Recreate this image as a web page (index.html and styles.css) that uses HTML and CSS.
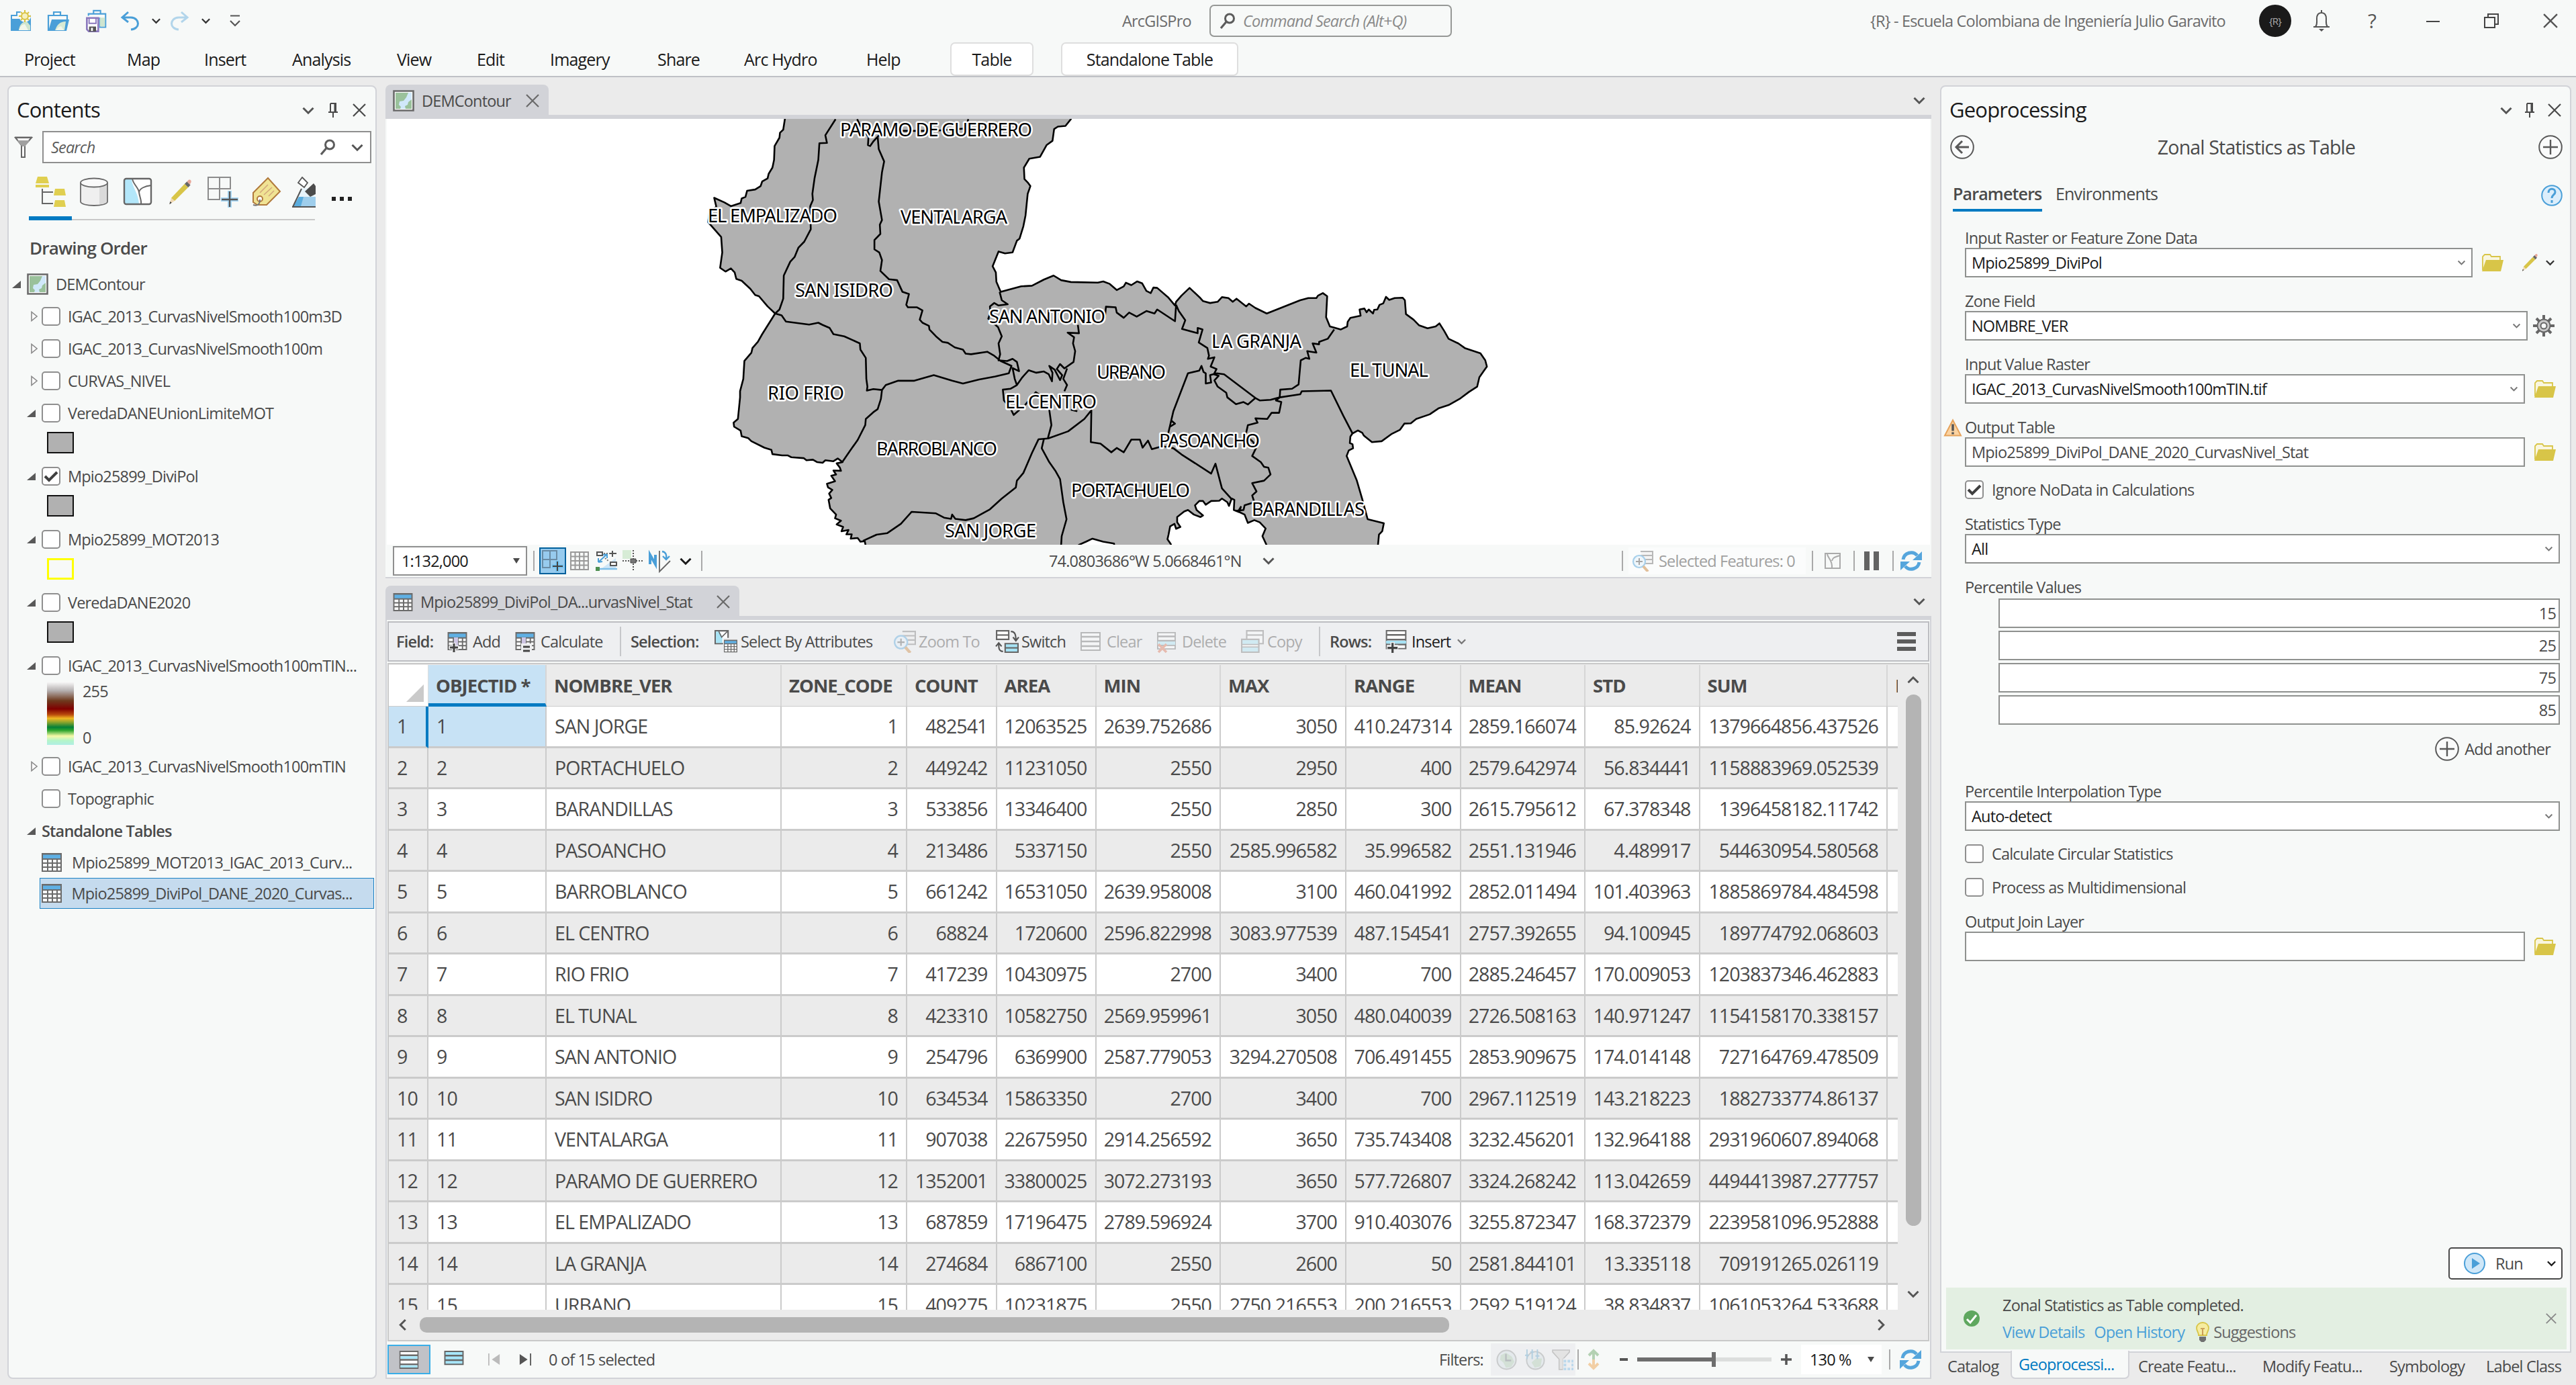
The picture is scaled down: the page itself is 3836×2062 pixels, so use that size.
FILE: index.html
```html
<!DOCTYPE html>
<html lang="en">
<head>
<meta charset="utf-8">
<title>ArcGISPro</title>
<link rel="stylesheet" href="styles.css">
</head>
<body>
<svg class="defs" aria-hidden="true">
  <symbol id="chev" viewBox="0 0 16 12"><path d="M2 3l6 6 6-6" fill="none" stroke="currentColor" stroke-width="2.4"/></symbol>
  <symbol id="x" viewBox="0 0 20 20"><path d="M1 1l18 18M19 1L1 19" fill="none" stroke="currentColor" stroke-width="2.2"/></symbol>
  <symbol id="pin" viewBox="0 0 16 22"><path d="M4 1h8v12M4 1v12M1 14h14M8 14v8" fill="none" stroke="currentColor" stroke-width="2"/><path d="M9.500 1h3v13h-3z" fill="currentColor"/></symbol>
  <symbol id="mag" viewBox="0 0 24 24"><circle cx="15" cy="8.500" r="6.500" fill="none" stroke="currentColor" stroke-width="3"/><path d="M10.500 13L2 23" stroke="currentColor" stroke-width="3.200"/></symbol>
  <symbol id="tri" viewBox="0 0 10 8"><path d="M0 0h10L5 8z" fill="currentColor"/></symbol>
  <symbol id="open" viewBox="0 0 14 14"><path d="M14 1v12H0z" fill="#595959"/></symbol>
  <symbol id="closed" viewBox="0 0 10 16"><path d="M1 1.500v13L9 8z" fill="#fff" stroke="#8a8a8a" stroke-width="1.600"/></symbol>
  <symbol id="check" viewBox="0 0 28 28"><rect x="1" y="1" width="26" height="26" rx="4" fill="#fff" stroke="#8f8f8f" stroke-width="2"/></symbol>
  <symbol id="checked" viewBox="0 0 28 28"><rect x="1" y="1" width="26" height="26" rx="4" fill="#fff" stroke="#8f8f8f" stroke-width="2"/><path d="M5 14l6 6L23 8" fill="none" stroke="#404040" stroke-width="4"/></symbol>
  <symbol id="map" viewBox="0 0 32 32"><path d="M1.500 1.500h29v29h-29z" fill="#fff" stroke="#6a6a6a" stroke-width="2.600"/><path d="M4 4h24v24H4z" fill="#d0e8fa"/><path d="M4 4h19l-3 7-4 5-6 1-1 5 3 3-1 3H4zM28 14v14h-9l-1-4 4-2 1-4z" fill="#9ac19b"/></symbol>
  <symbol id="table" viewBox="0 0 30 28"><path d="M0 0h30v28H0z" fill="#6b6b6b"/><path d="M2 2.500h26V8H2z" fill="#5fb0e4"/><path d="M2 10h6v4H2zm8 0h5v4h-5zm7 0h5v4h-5zm7 0h4v4h-4zM2 16h6v4H2zm8 0h5v4h-5zm7 0h5v4h-5zm7 0h4v4h-4zM2 22h6v4H2zm8 0h5v4h-5zm7 0h5v4h-5zm7 0h4v4h-4z" fill="#fff"/></symbol>
  <symbol id="folder" viewBox="0 0 32 26"><path d="M1 24V4l3-3h8l2 3h13v6" fill="#f9f6df" stroke="#d8c548" stroke-width="1.800"/><path d="M6 9h26l-4 17H0z" fill="#d8c548"/></symbol>
  <symbol id="pencil" viewBox="0 0 40 46"><path d="M2 44l3-11 6 5z" fill="#f0d9b5"/><path d="M2 44l1-5 3 2z" fill="#444"/><path d="M5 33L28 9l6 6-23 23z" fill="#d8c548"/><path d="M28 9l4-4 6 6-4 4z" fill="#666"/><path d="M32 5l3-3c3-1 5 2 4 4l-2 4z" fill="#e8a799"/></symbol>
  <symbol id="plusc" viewBox="0 0 36 36"><circle cx="18" cy="18" r="16.800" fill="#fafbfb" stroke="#595959" stroke-width="2"/><path d="M18 7v22M7 18h22" stroke="#595959" stroke-width="2.400"/></symbol>
  <symbol id="refresh" viewBox="0 0 32 32"><path d="M4 14A12 12 0 0 1 25 8" fill="none" stroke="#55a5dc" stroke-width="5"/><path d="M32 2v13H18z" fill="#55a5dc"/><path d="M28 18A12 12 0 0 1 7 24" fill="none" stroke="#55a5dc" stroke-width="5"/><path d="M0 30V17h14z" fill="#55a5dc"/></symbol>
  <symbol id="zoomsel" viewBox="0 0 32 32"><path d="M13 2h18v18H19" fill="#eee" stroke="#777" stroke-width="2"/><path d="M13 8h18M18 14h13" stroke="#777" stroke-width="2"/><circle cx="11" cy="17" r="9" fill="#e3f1fb" stroke="#55a5dc" stroke-width="2.200"/><path d="M6 17h10M11 12v10" stroke="#555" stroke-width="2"/><path d="M17 24l7 8" stroke="#c98338" stroke-width="4"/></symbol>
  <symbol id="rows" viewBox="0 0 30 28"><path d="M1 1h28v26H1z" fill="#fff" stroke="#6a6a6a" stroke-width="2"/><path d="M1 7h28M1 14h28M1 21h28" stroke="#6a6a6a" stroke-width="2.500"/></symbol>
</svg>

<header class="app-header">
  <div class="titlebar">
    <svg class="i32" viewBox="0 0 32 32"><path d="M1 8h30v23H1z" fill="#4a9fd8"/><path d="M2 13V8h8V3h10v5h10v5" fill="#f7f9f8" stroke="#4a9fd8" stroke-width="2"/><circle cx="22" cy="9" r="9" fill="#f7f9f8"/><path d="M13 30c1-8 5-13 12-13l5 6v7z" fill="#cfe5cf"/><path d="M13 30c2-6 5-9 9-9l5 9z" fill="#f3f6ea"/><circle cx="22" cy="9" r="5" fill="#f4efc0" stroke="#d9c23e" stroke-width="2"/><path d="M22 0v3M22 15v3M13 9h3M28 9h3M16 3l2 2M28 3l-2 2M16 15l2-2M28 15l-2-2" stroke="#d9c23e" stroke-width="2"/></svg>
    <svg class="i32" viewBox="0 0 32 32"><path d="M1 31V8h28v7M9 8V3h10v5" fill="none" stroke="#4a9fd8" stroke-width="2.200"/><path d="M6 14h26l-4 17H1z" fill="#4a9fd8"/><path d="M11 30c3-8 7-13 16-13l-2 13z" fill="#d8ead4"/><path d="M12 30c3-4 6-6 8-6l4 6z" fill="#f3f6ea"/></svg>
    <svg class="i34" viewBox="0 0 34 36"><path d="M4 10V7h27v21h-9V14H7M12 7V2h11v5" fill="none" stroke="#4a9fd8" stroke-width="2.200"/><path d="M22 13h8v14h-8z" fill="#cfe5cf"/><path d="M1.500 13.500h18v21h-15l-3-3z" fill="#fff" stroke="#8a78bd" stroke-width="2.800"/><path d="M5 13v9h11v-9" fill="none" stroke="#8a78bd" stroke-width="2"/><path d="M5 27h11v8H5z" fill="#555"/><path d="M8 29h3v5H8z" fill="#fff"/></svg>
    <svg class="i28" viewBox="0 0 28 28"><path d="M11 1L2 9l9 7M2 9h13c14 1 14 17 0 18" fill="none" stroke="#4a9fd8" stroke-width="3"/></svg>
    <svg class="chev sm dark"><use href="#chev"/></svg>
    <svg class="i28 dim" viewBox="0 0 28 28"><path d="M17 1l9 8-9 7M26 9H13C-1 10-1 26 13 27" fill="none" stroke="#4a9fd8" stroke-width="3"/></svg>
    <svg class="chev sm dark"><use href="#chev"/></svg>
    <svg class="qat" viewBox="0 0 18 18"><path d="M2 1.500h14M2 9l7 7 7-7" fill="none" stroke="#555" stroke-width="2.200"/></svg>
    <span class="soft">ArcGISPro</span>
    <div class="cmd"><svg class="mag"><use href="#mag"/></svg><i>Command Search (Alt+Q)</i></div>
    <span class="soft org">{R} - Escuela Colombiana de Ingeniería Julio Garavito</span>
    <div class="avatar">{R}</div>
    <svg class="bell" viewBox="0 0 26 32"><path d="M1 25h24M4 25c3-4 2-6 2-12C6 6 9 4 13 4s7 2 7 9c0 6-1 8 2 12M13 4V0" fill="none" stroke="#555" stroke-width="2"/><path d="M9 28h8l-4 4z" fill="#555"/></svg>
    <span class="helpq">?</span>
    <svg class="win" viewBox="0 0 22 22"><path d="M1 12h20" stroke="#444" stroke-width="2"/></svg>
    <svg class="win" viewBox="0 0 22 22"><path d="M1 6h15v15H1zM6 6V1h15v15h-5" fill="none" stroke="#444" stroke-width="2"/></svg>
    <svg class="win"><use href="#x"/></svg>
  </div>
  <nav class="menubar">
    <span>Project</span><span>Map</span><span>Insert</span><span>Analysis</span><span>View</span><span>Edit</span><span>Imagery</span><span>Share</span><span>Arc Hydro</span><span>Help</span><span class="ctx">Table</span><span class="ctx wide">Standalone Table</span>
  </nav>
</header>

<main class="workspace">
  <section class="panel contents">
    <div class="panel-head"><h2>Contents</h2><svg class="chev"><use href="#chev"/></svg><svg class="pin"><use href="#pin"/></svg><svg class="px"><use href="#x"/></svg></div>
    <div class="search-row">
      <svg class="funnel" viewBox="0 0 28 32"><path d="M1 1.500h26M2 2l9 11v18h5V13l10-11z" fill="#fff" stroke="#666" stroke-width="2"/><path d="M4 6h20l-8 9h-4z" fill="#a0a0a0"/></svg>
      <div class="search"><i>Search</i><svg class="mag"><use href="#mag"/></svg><svg class="chev"><use href="#chev"/></svg></div>
    </div>
    <div class="modes">
      <svg viewBox="0 0 46 46"><path d="M3 0h14l3 10H0zM0 12h20v4H0z" fill="#e0cf50"/><path d="M10 18v22h16M10 23h16" fill="none" stroke="#666" stroke-width="2"/><path d="M29 18h14l2 10H27zM29 35h14l2 10H27z" fill="#e0cf50"/></svg>
      <svg viewBox="0 0 46 46"><path d="M2 9v28c0 8 40 8 40 0V9" fill="#efefef" stroke="#6a6a6a" stroke-width="1.800"/><path d="M30 15v26c7 0 11-2 11-4V11z" fill="#dadada"/><ellipse cx="22" cy="9" rx="20" ry="6.500" fill="#fafafa" stroke="#6a6a6a" stroke-width="1.800"/></svg>
      <svg viewBox="0 0 46 46"><rect x="2" y="3" width="40" height="38" rx="3" fill="#fff"/><path d="M3 4h10c1 12 10 20 11 37H3z" fill="#b3e7fa"/><path d="M14 3c1 8 9 13 10 20 1 8 4 12 3 18M24 23c1-5 8-9 18-10" fill="none" stroke="#666" stroke-width="2"/><rect x="2" y="3" width="40" height="38" rx="3" fill="none" stroke="#666" stroke-width="2.400"/></svg>
      <svg viewBox="0 0 46 46"><use href="#pencil" x="0" y="3" width="40" height="40"/></svg>
      <svg viewBox="0 0 46 46"><path d="M1 1h33v17H1zM18 1v17M1 18v16h17V18" fill="none" stroke="#8c8c8c" stroke-width="2"/><path d="M33 21v25M20 34h26" stroke="#a9d9f6" stroke-width="6"/><path d="M33 22v23M21 34h24" stroke="#555" stroke-width="2.400"/></svg>
      <svg viewBox="0 0 46 46"><path d="M2 24L24 2l18 20-20 20H8l-6-4z" fill="#f0e394" stroke="#b17a3c" stroke-width="2"/><path d="M12 24l12-12M18 27l12-11M25 29l8-8" stroke="#d3a87c" stroke-width="1.600"/><circle cx="12" cy="33" r="4" fill="#fff" stroke="#b17a3c" stroke-width="2"/><path d="M12 34c0 8-4 10-10 8" fill="none" stroke="#777" stroke-width="2"/></svg>
      <svg viewBox="0 0 35 46"><path d="M1 45l14-28h12l8 14v14z" fill="#e8f4fb"/><path d="M2 44l8-14h25v14z" fill="#5badde"/><path d="M17 30h18v14H13z" fill="#bcdcf2" opacity=".7"/><path d="M0 45h35M1 45L14 18" stroke="#555" stroke-width="2"/><path d="M15 1l8 8-5 7-9-7z" fill="#fff" stroke="#555" stroke-width="1.800"/><path d="M19 22L32 10l3 4v12l-8 4z" fill="#4c4c4c"/></svg>
      <svg class="dots" viewBox="0 0 32 8"><path d="M0 1h6v6H0zm12 0h6v6h-6zm12 0h6v6h-6z" fill="#222"/></svg>
    </div>
    <div class="mode-line"></div>
    <h3>Drawing Order</h3>
    <div class="tree">
      <div class="t t0"><svg class="tw"><use href="#open"/></svg><svg class="mp"><use href="#map"/></svg>DEMContour</div>
      <div class="t"><svg class="tc"><use href="#closed"/></svg><svg class="cb"><use href="#check"/></svg>IGAC_2013_CurvasNivelSmooth100m3D</div>
      <div class="t"><svg class="tc"><use href="#closed"/></svg><svg class="cb"><use href="#check"/></svg>IGAC_2013_CurvasNivelSmooth100m</div>
      <div class="t"><svg class="tc"><use href="#closed"/></svg><svg class="cb"><use href="#check"/></svg>CURVAS_NIVEL</div>
      <div class="t"><svg class="tw"><use href="#open"/></svg><svg class="cb"><use href="#check"/></svg>VeredaDANEUnionLimiteMOT</div>
      <div class="sw"><b></b></div>
      <div class="t"><svg class="tw"><use href="#open"/></svg><svg class="cb"><use href="#checked"/></svg>Mpio25899_DiviPol</div>
      <div class="sw"><b></b></div>
      <div class="t"><svg class="tw"><use href="#open"/></svg><svg class="cb"><use href="#check"/></svg>Mpio25899_MOT2013</div>
      <div class="sw"><b class="yellow"></b></div>
      <div class="t"><svg class="tw"><use href="#open"/></svg><svg class="cb"><use href="#check"/></svg>VeredaDANE2020</div>
      <div class="sw"><b></b></div>
      <div class="t"><svg class="tw"><use href="#open"/></svg><svg class="cb"><use href="#check"/></svg>IGAC_2013_CurvasNivelSmooth100mTIN...</div>
      <div class="ramp"><b></b><div><span>255</span><span>0</span></div></div>
      <div class="t"><svg class="tc"><use href="#closed"/></svg><svg class="cb"><use href="#check"/></svg>IGAC_2013_CurvasNivelSmooth100mTIN</div>
      <div class="t"><svg class="tc hide"></svg><svg class="cb"><use href="#check"/></svg>Topographic</div>
      <div class="t strong"><svg class="tw"><use href="#open"/></svg>Standalone Tables</div>
      <div class="t tb"><svg><use href="#table"/></svg>Mpio25899_MOT2013_IGAC_2013_Curv...</div>
      <div class="t tb sel"><svg><use href="#table"/></svg>Mpio25899_DiviPol_DANE_2020_Curvas...</div>
    </div>
  </section>

  <div class="docs">
    <section class="doc">
      <div class="tabstrip"><div class="tab"><svg class="mp"><use href="#map"/></svg><span>DEMContour</span><svg class="px"><use href="#x"/></svg></div><svg class="chev"><use href="#chev"/></svg></div>
      <div class="mapview">
        <svg class="mapsvg" viewBox="576 177 2298 634">
          <g class="land" transform="translate(1000 160) scale(.80357 .45918)">
            <path class="area" d="M212 20L210 38 207 72 201 82 200 98 191 125 190 170 187 195 180 215 178 230 168 240 165 255 155 266 140 270 137 290 130 295 128 310 110 320 98 308 79 293 83 322 70 340 68 372 92 420 94 470 90 520 100 532 110 522 117 535 120 556 130 562 146 588 155 608 162 612 178 645 192 668 186 685 168 735 160 760 150 780 148 795 135 822 133 880 127 920 127 940 123 1010 115 1022 116 1035 128 1048 130 1066 142 1072 148 1082 172 1103 185 1110 187 1124 205 1128 215 1128 222 1134 245 1137 250 1144 262 1142 270 1150 280 1152 285 1144 300 1147 308 1138 317 1150 306 1154 312 1168 314 1178 300 1177 305 1190 296 1194 303 1212 288 1220 290 1232 298 1240 292 1252 296 1266 291 1272 294 1300 305 1320 303 1332 314 1340 306 1352 318 1360 315 1374 328 1370 324 1384 334 1384 332 1398 345 1396 350 1408 358 1406 362 1440 H745 L755 1418 768 1408 780 1398 800 1408 820 1414 822 1440 H930 L925 1415 919 1400 921 1385 924 1358 932 1350 935 1366 943 1360 937 1345 937 1328 950 1310 957 1305 968 1320 980 1328 985 1323 973 1305 970 1290 978 1276 985 1276 990 1288 1000 1276 1015 1275 1020 1268 1030 1280 1033 1292 1038 1268 1043 1272 1042 1305 1052 1312 1055 1295 1050 1310 1062 1320 1068 1347 1080 1338 1090 1345 1101 1365 1095 1390 1103 1420 1100 1440 H1308 L1311 1385 1317 1374 1320 1348 1290 1335 1280 1270 1270 1210 1251 1130 1255 1112 1263 1105 1262 1092 1257 1088 1258 1067 1262 1057 1272 1047 1280 1055 1283 1064 1298 1085 1316 1082 1335 1058 1350 1045 1358 1025 1370 1024 1380 1010 1405 995 1422 975 1440 965 1462 943 1478 922 1493 905 1497 875 1505 855 1511 840 1508 820 1499 797 1470 780 1458 765 1440 750 1432 725 1423 700 1416 710 1401 716 1385 706 1375 688 1361 670 1359 625 1355 617 1340 618 1330 624 1324 614 1319 635 1312 640 1308 655 1302 656 1300 668 1292 655 1288 664 1284 652 1275 655 1277 675 1258 682 1253 695 1252 710 1240 720 1228 714 1220 710 1213 680 1215 612 1207 602 1198 610 1195 618 1180 618 1165 625 1103 668 1082 650 1070 636 1065 645 1047 620 1040 630 1032 618 1020 615 1012 630 998 634 985 628 980 618 960 585 945 610 935 630 933 642 920 615 900 585 893 584 888 602 880 595 872 570 863 564 852 576 842 568 838 580 825 592 812 572 800 564 790 568 740 566 722 560 708 545 690 558 668 578 648 580 610 598 602 565 601 535 595 515 606 467 618 473 632 470 640 432 645 425 652 385 656 350 660 280 665 255 660 243 654 232 653 195 663 166 683 160 695 122 706 108 709 70 716 62 730 60 740 38 742 20Z"/>
            <path d="M304 38L285 90 288 115 274 116 272 170 265 230 261 280 262 300 257 320 258 395 246 435 235 455 228 485 220 500 208 545 207 620 200 655 192 668 204 674 212 694 255 704 272 698 280 705 293 715 300 735 320 742 349 765 350 785 360 812 361 880 363 905 362 918 374 913 390 916 397 900 420 886 450 886 486 868 520 886 540 895 570 882 600 872 625 862 630 838 610 822 598 805 585 792 555 800 545 798 540 785 525 778 512 763 502 760 490 742 478 720 477 708 465 698 460 688 465 658 455 648 438 648 435 640 440 605 428 598 418 560 403 557 387 530 390 495 385 470 376 460 376 430 387 410 386 380 390 365 384 305 390 210 394 175 384 135 382 95 374 110 368 125 364 122 365 95 350 60 344 38M550 38l-5 30-60 8h-85l-18 18M390 916L388 945 382 978 374 988 360 1010 359 1030 345 1078 330 1115 317 1148M355 1405L380 1385 400 1380 425 1350 445 1311 490 1316 505 1330 518 1334 520 1320 526 1334 545 1338 560 1332 590 1303 612 1268 638 1232 640 1210 652 1185 668 1120 680 1076 698 1073 735 1050 765 1010 778 982 777 1085 795 1090 815 1118 825 1104 838 1118 852 1077 868 1077 873 1103 883 1080 890 1108 910 1098 930 1105 945 1125 1000 1187 1008 1155 1020 1235 1038 1270M700 980L704 1030 697 1075M690 1075L686 1105 700 1150 712 1180 720 1205 726 1280 732 1335 723 1390 722 1418M722 1418V1440M608 598L612 625 623 638 606 642 598 634 590 645 591 665 587 685 605 712 612 742 606 765 609 800 606 820 622 822 632 815 640 825 644 855 632 845 636 880 640 900 628 912 614 915 616 950 628 975 634 997 645 980M640 900L650 875 662 852 676 860 690 856 699 865 705 888 706 860 700 838 710 850 720 884 724 868 714 848 720 832 728 846 745 825 748 790 744 765 746 745 734 730 755 732 753 705M803 684L805 646 823 648 825 665 838 682 848 665 862 678 880 660 895 668 900 655 933 693 935 640M935 640L940 660 952 690 946 718 975 732 975 715 984 720 977 762 993 780 996 805 994 815 1006 810 999 840 1010 848 1005 865 1014 870 1006 885 1012 905 1028 925 1030 940 1046 962 1060 955 1068 963 1082 942 1024 865 1010 862M920 1060L930 985 957 862 978 853 982 838 986 858 990 862 990 895 1000 892 998 868 1010 862M1082 942L1090 950 1110 948 1127 940 1165 930 1168 920 1222 918 1245 1000 1262 1057M1127 940L1128 915 1150 912 1162 898 1166 820 1175 812 1182 815 1178 790 1195 795 1188 765 1200 768 1200 760 1216 750 1228 720M1127 940L1120 950 1130 955 1126 990 1112 990 1104 1010 1082 1008 1086 1022 1068 1030 1064 1062 1078 1085 1083 1105 1076 1130 1092 1150 1098 1165 1106 1168 1110 1190 1098 1210 1076 1218 1084 1245 1076 1258 1080 1280 1062 1290 1060 1305 1046 1308M930 985L926 1015 933 1025 924 1035M733 846L726 880 733 900 728 920M740 980l12 5M655 965l20-42 8 10"/>
          </g>
          <g class="labels">
            <text x="1251" y="203" textLength="286">PARAMO DE GUERRERO</text>
            <text x="1054" y="331" textLength="193">EL EMPALIZADO</text>
            <text x="1341" y="333" textLength="159">VENTALARGA</text>
            <text x="1184" y="442" textLength="146">SAN ISIDRO</text>
            <text x="1473" y="481" textLength="173">SAN ANTONIO</text>
            <text x="1804" y="518" textLength="134">LA GRANJA</text>
            <text x="1633" y="564" textLength="103">URBANO</text>
            <text x="2010" y="561" textLength="117">EL TUNAL</text>
            <text x="1143" y="595" textLength="114">RIO FRIO</text>
            <text x="1497" y="608" textLength="136">EL CENTRO</text>
            <text x="1305" y="678" textLength="180">BARROBLANCO</text>
            <text x="1726" y="666" textLength="150">PASOANCHO</text>
            <text x="1595" y="740" textLength="177">PORTACHUELO</text>
            <text x="1864" y="768" textLength="168">BARANDILLAS</text>
            <text x="1407" y="800" textLength="136">SAN JORGE</text>
          </g>
        </svg>
      </div>
      <div class="mapbar">
        <div class="scale"><span>1:132,000</span><svg class="tri"><use href="#tri"/></svg></div>
        <i class="sep"></i>
        <div class="on"><svg class="i32" viewBox="0 0 32 32"><path d="M1 1h21v13H1zM12 1v13M1 14v12h11V14" fill="none" stroke="#6a8ca5" stroke-width="2"/><path d="M23 16v16M15 24h17" stroke="#6fc1f0" stroke-width="5"/><path d="M23 17v14M16 24h15" stroke="#444" stroke-width="2"/></svg></div>
        <svg class="i28" viewBox="0 0 28 28"><path d="M1 1h26v26H1zM1 7.500h26M1 14h26M1 20.500h26M7.500 1v26M14 1v26M20.500 1v26" fill="none" stroke="#9a9a9a" stroke-width="2"/></svg>
        <svg class="i32" viewBox="0 0 32 32"><path d="M30 28H8l22-16z" fill="#cfe6f7"/><path d="M2 3h8v5H2zM22 18h9v5h-9z" fill="#fff" stroke="#555" stroke-width="2"/><path d="M25 1v9M21 5h10" stroke="#555" stroke-width="2"/><path d="M4 18L17 6M4 18l6-1M4 18v-6M17 6l-6 1M17 6v6" fill="none" stroke="#4a9fd8" stroke-width="2"/><path d="M12 5h9M14 12l6 5" stroke="#777" stroke-width="2" stroke-dasharray="2 2"/><path d="M4 28h28" stroke="#7fbfe8" stroke-width="2.500"/><path d="M0 25h6v6H0z" fill="#4d8f50"/></svg>
        <svg class="i32" viewBox="0 0 32 32"><path d="M0 0h13v13H0z" fill="#d7ecd6"/><path d="M16 0v32M0 16h32" stroke="#555" stroke-width="2" stroke-dasharray="2 2"/><path d="M12 13h8v6h-8z" fill="#777" stroke="#444"/></svg>
        <svg class="i32" viewBox="0 0 32 32"><path d="M2 21V7l8 14V7" fill="none" stroke="#4a9fd8" stroke-width="4"/><path d="M16 1v31L32 16" fill="none" stroke="#666" stroke-width="1.800"/><path d="M20 2c6 1 7 6 6 11M21 9l5 5 5-5" fill="none" stroke="#4a9fd8" stroke-width="2.400"/></svg>
        <svg class="chev blk"><use href="#chev"/></svg>
        <i class="sep"></i>
        <span>74.0803686°W 5.0668461°N</span>
        <svg class="chev fat"><use href="#chev"/></svg>
        <i class="sep"></i>
        <div class="self"><svg class="i32"><use href="#zoomsel"/></svg><span>Selected Features: 0</span></div>
        <i class="sep"></i>
        <svg class="i24" viewBox="0 0 24 24"><path d="M1 1h22v22H1zM4 2c1 7 8 8 7 21M11 12c1-5 5-6 12-8" fill="none" stroke="#aaa" stroke-width="2"/></svg>
        <i class="sep"></i>
        <svg class="i24" viewBox="0 0 24 28"><path d="M0 0h8v28H0zM14 0h8v28h-8z" fill="#636363"/></svg>
        <i class="sep"></i>
        <svg class="i32"><use href="#refresh"/></svg>
      </div>
    </section>

    <section class="doc attr">
      <div class="tabstrip"><div class="tab wide"><svg class="tbi"><use href="#table"/></svg><span>Mpio25899_DiviPol_DA...urvasNivel_Stat</span><svg class="px"><use href="#x"/></svg></div><svg class="chev"><use href="#chev"/></svg></div>
      <div class="attr-body">
        <div class="toolbar">
          <b>Field:</b>
          <svg class="i32" viewBox="0 0 32 32"><use href="#table" x="1" y="2" width="30" height="27"/><path d="M11 10h6v16h-6z" fill="#cfc6e4"/><path d="M11 18v14M4 25h14" stroke="#eeeff1" stroke-width="6"/><path d="M11 19v13M5 25h12" stroke="#444" stroke-width="3"/></svg><span>Add</span>
          <svg class="i32" viewBox="0 0 32 32"><use href="#table" x="1" y="2" width="30" height="27"/><path d="M11 10h6v12h-6z" fill="#cfc6e4"/><path d="M10 19h16v13H10z" fill="#eeeff1"/><path d="M13 24h10M13 30h10" stroke="#444" stroke-width="3"/></svg><span>Calculate</span>
          <i class="sep"></i>
          <b>Selection:</b>
          <svg class="i34" viewBox="0 0 32 32"><path d="M1 1h18v18H1z" fill="#fff" stroke="#666" stroke-width="2"/><path d="M2 2h5l4 8v8H2z" fill="#a7e3f5"/><path d="M6 2l4 8 8-8" fill="none" stroke="#666" stroke-width="1.500"/><path d="M12 11h20v21H12z" fill="#eeeff1"/><use href="#table" x="13" y="13" width="19" height="19"/></svg><span>Select By Attributes</span>
          <svg class="i34 off"><use href="#zoomsel"/></svg><span class="off">Zoom To</span>
          <svg class="i34" viewBox="0 0 32 32"><path d="M1 1h17v12H1z" fill="#fff" stroke="#666" stroke-width="2"/><path d="M1 7h17" stroke="#666" stroke-width="2"/><path d="M13 19h18v12H13z" fill="#a7e3f5" stroke="#666" stroke-width="2"/><path d="M13 25h18" stroke="#666" stroke-width="2"/><path d="M21 2c6 0 7 5 7 12M24 10l4 5 4-5M10 30c-6 0-6-5-6-11M0 23l4-5 4 5" fill="none" stroke="#555" stroke-width="2"/></svg><span>Switch</span>
          <svg class="i30 off"><use href="#rows"/></svg><span class="off">Clear</span>
          <svg class="i32 off" viewBox="0 0 32 32"><use href="#rows" x="1" y="2" width="30" height="26"/><path d="M3 16h26v5H3z" fill="#a7e3f5"/><path d="M4 20l12 12M16 20L4 32" stroke="#dc6c4c" stroke-width="3.500"/></svg><span class="off">Delete</span>
          <svg class="i34 off" viewBox="0 0 32 32"><path d="M8 1h23v18H8z" fill="#fff" stroke="#777" stroke-width="2"/><path d="M8 7h23" stroke="#777" stroke-width="2"/><path d="M1 13h24v18H1z" fill="#a7e3f5" stroke="#777" stroke-width="2"/><path d="M1 22h24" stroke="#777" stroke-width="5"/><path d="M2 22h22" stroke="#fff" stroke-width="2"/></svg><span class="off">Copy</span>
          <i class="sep"></i>
          <b>Rows:</b>
          <svg class="i34" viewBox="0 0 32 32"><use href="#rows" x="0" y="0" width="32" height="27"/><path d="M2 15h28v4H2z" fill="#a7e3f5"/><path d="M11 17v15M3 24h16" stroke="#eeeff1" stroke-width="6"/><path d="M11 18v14M4 25h14" stroke="#444" stroke-width="3"/></svg><span class="blk">Insert</span>
          <svg class="chev sm"><use href="#chev"/></svg>
          <svg class="burger" viewBox="0 0 28 28"><path d="M0 3h28M0 14h28M0 25h28" stroke="#5c5c5c" stroke-width="6"/></svg>
        </div>
        <div class="gridframe">
          <div class="clip">
            <table>
              <thead><tr><th><svg class="corner" viewBox="0 0 26 26"><path d="M26 0v26H0z" fill="#cacaca"/></svg></th><th class="cur">OBJECTID *</th><th>NOMBRE_VER</th><th>ZONE_CODE</th><th>COUNT</th><th>AREA</th><th>MIN</th><th>MAX</th><th>RANGE</th><th>MEAN</th><th>STD</th><th>SUM</th><th>M</th></tr></thead>
              <tbody>
                <tr class="first"><td>1<td>1<td>SAN JORGE<td>1<td>482541<td>12063525<td>2639.752686<td>3050<td>410.247314<td>2859.166074<td>85.92624<td>1379664856.437526<td>
                <tr><td>2<td>2<td>PORTACHUELO<td>2<td>449242<td>11231050<td>2550<td>2950<td>400<td>2579.642974<td>56.834441<td>1158883969.052539<td>
                <tr><td>3<td>3<td>BARANDILLAS<td>3<td>533856<td>13346400<td>2550<td>2850<td>300<td>2615.795612<td>67.378348<td>1396458182.11742<td>
                <tr><td>4<td>4<td>PASOANCHO<td>4<td>213486<td>5337150<td>2550<td>2585.996582<td>35.996582<td>2551.131946<td>4.489917<td>544630954.580568<td>
                <tr><td>5<td>5<td>BARROBLANCO<td>5<td>661242<td>16531050<td>2639.958008<td>3100<td>460.041992<td>2852.011494<td>101.403963<td>1885869784.484598<td>
                <tr><td>6<td>6<td>EL CENTRO<td>6<td>68824<td>1720600<td>2596.822998<td>3083.977539<td>487.154541<td>2757.392655<td>94.100945<td>189774792.068603<td>
                <tr><td>7<td>7<td>RIO FRIO<td>7<td>417239<td>10430975<td>2700<td>3400<td>700<td>2885.246457<td>170.009053<td>1203837346.462883<td>
                <tr><td>8<td>8<td>EL TUNAL<td>8<td>423310<td>10582750<td>2569.959961<td>3050<td>480.040039<td>2726.508163<td>140.971247<td>1154158170.338157<td>
                <tr><td>9<td>9<td>SAN ANTONIO<td>9<td>254796<td>6369900<td>2587.779053<td>3294.270508<td>706.491455<td>2853.909675<td>174.014148<td>727164769.478509<td>
                <tr><td>10<td>10<td>SAN ISIDRO<td>10<td>634534<td>15863350<td>2700<td>3400<td>700<td>2967.112519<td>143.218223<td>1882733774.86137<td>
                <tr><td>11<td>11<td>VENTALARGA<td>11<td>907038<td>22675950<td>2914.256592<td>3650<td>735.743408<td>3232.456201<td>132.964188<td>2931960607.894068<td>
                <tr><td>12<td>12<td>PARAMO DE GUERRERO<td>12<td>1352001<td>33800025<td>3072.273193<td>3650<td>577.726807<td>3324.268242<td>113.042659<td>4494413987.277757<td>
                <tr><td>13<td>13<td>EL EMPALIZADO<td>13<td>687859<td>17196475<td>2789.596924<td>3700<td>910.403076<td>3255.872347<td>168.372379<td>2239581096.952888<td>
                <tr><td>14<td>14<td>LA GRANJA<td>14<td>274684<td>6867100<td>2550<td>2600<td>50<td>2581.844101<td>13.335118<td>709191265.026119<td>
                <tr><td>15<td>15<td>URBANO<td>15<td>409275<td>10231875<td>2550<td>2750.216553<td>200.216553<td>2592.519124<td>38.834837<td>1061053264.533688<td>
              </tbody>
            </table>
          </div>
          <div class="vscroll"><svg class="chev up"><use href="#chev"/></svg><b></b><svg class="chev"><use href="#chev"/></svg></div>
          <div class="hscroll"><svg class="chev left"><use href="#chev"/></svg><b></b><svg class="chev right"><use href="#chev"/></svg></div>
        </div>
        <div class="statusbar">
          <div class="view"><svg class="rw" viewBox="0 0 30 28"><use href="#rows"/><path d="M2 8.500h26v4H2zM2 22.500h26V26H2z" fill="#a7e6fa"/></svg></div>
          <svg class="rw up1" viewBox="0 0 30 28"><path d="M1 1h28v20H1z" fill="#a7e6fa" stroke="#666" stroke-width="2"/><path d="M1 7.500h28M1 14.500h28" stroke="#666" stroke-width="2.500"/></svg>
          <svg class="nav" viewBox="0 0 20 20"><path d="M1 0v20" stroke="#bbb" stroke-width="2"/><path d="M19 1v18L6 10z" fill="#bbb"/></svg>
          <svg class="nav" viewBox="0 0 20 20"><path d="M19 0v20" stroke="#555" stroke-width="2"/><path d="M1 1v18l13-9z" fill="#555"/></svg>
          <span>0 of 15 selected</span>
          <span>Filters:</span>
          <div class="filters">
            <svg viewBox="0 0 32 32"><circle cx="16" cy="16" r="14.500" fill="#e4e9ec" stroke="#c9cbcc" stroke-width="2"/><path d="M7 9l8-4 9 6 4 8-5 8-8 1-4-8-5-4z" fill="#d3e0d6"/><path d="M15 7v10h8" fill="none" stroke="#b9bdc0" stroke-width="2.400"/></svg>
            <svg viewBox="0 0 32 32"><circle cx="17" cy="17" r="13.500" fill="#e4e9ec" stroke="#c9cbcc" stroke-width="2"/><path d="M18 14l9 0-2 12-9 2-5-8z" fill="#d3e0d6"/><path d="M4 0v15M12 0v15M20 0v15M1 9h6M9 4h6M17 10h6" stroke="#b3cfe0" stroke-width="2"/></svg>
            <svg viewBox="0 0 32 32"><path d="M0 1h26v3L16 15v16h-6V15L0 4z" fill="#e3e3e3" stroke="#c4c4c4" stroke-width="1.600"/><path d="M16 14h16v18H16z" fill="#eeeff1"/><path d="M17 16h4v4h-4zm6 0h4v4h-4zm6 0h3v4h-3zM17 22h4v4h-4zm12 0h3v4h-3zM17 28h4v4h-4zm6 0h4v4h-4zm6 0h3v4h-3z" fill="#bcd9ec"/></svg>
          </div>
          <i class="sep"></i>
          <svg class="ud" viewBox="0 0 20 30"><path d="M10 15V3M3 9l7-7 7 7" fill="none" stroke="#b4d1b3" stroke-width="4"/><path d="M10 15v12M3 21l7 7 7-7" fill="none" stroke="#f2cfa5" stroke-width="4"/></svg>
          <svg class="pm" viewBox="0 0 16 16"><path d="M1 8h12" stroke="#555" stroke-width="4"/></svg>
          <div class="slider"><b></b><u></u><s></s></div>
          <svg class="pm" viewBox="0 0 16 16"><path d="M0 8h16M8 0v16" stroke="#555" stroke-width="3.500"/></svg>
          <div class="pct"><span>130 %</span><svg class="tri"><use href="#tri"/></svg></div>
          <i class="sep"></i>
          <svg class="i32"><use href="#refresh"/></svg>
        </div>
      </div>
    </section>
  </div>

  <div class="side">
    <section class="panel geo">
      <div class="panel-head"><h2>Geoprocessing</h2><svg class="chev"><use href="#chev"/></svg><svg class="pin"><use href="#pin"/></svg><svg class="px"><use href="#x"/></svg></div>
      <div class="tool-title"><svg class="i36" viewBox="0 0 36 36"><circle cx="18" cy="18" r="16.800" fill="#fafbfb" stroke="#595959" stroke-width="2"/><path d="M28 18H10M18 9l-9 9 9 9" fill="none" stroke="#595959" stroke-width="3"/></svg><span>Zonal Statistics as Table</span><svg class="i36"><use href="#plusc"/></svg></div>
      <div class="ptabs"><b>Parameters</b><span>Environments</span><svg class="i32" viewBox="0 0 32 32"><circle cx="16" cy="16" r="14.800" fill="#dceefb" stroke="#4a9fd8" stroke-width="2"/><path d="M11 12c0-8 10-7 10-1 0 4-5 4-5 9M16 23v4" fill="none" stroke="#4a9fd8" stroke-width="3"/></svg></div>
      <div class="form">
        <label>Input Raster or Feature Zone Data</label>
        <div class="field f1"><div class="box blk"><span>Mpio25899_DiviPol</span><svg class="chev sm"><use href="#chev"/></svg></div><svg class="folder"><use href="#folder"/></svg><svg class="pen"><use href="#pencil"/></svg><svg class="chev sm dark"><use href="#chev"/></svg></div>
        <label>Zone Field</label>
        <div class="field f2"><div class="box blk"><span>NOMBRE_VER</span><svg class="chev sm"><use href="#chev"/></svg></div><svg class="i32" viewBox="0 0 32 32"><g stroke="#666" stroke-width="4"><path d="M16 0v32M0 16h32M5 5l22 22M27 5L5 27"/></g><circle cx="16" cy="16" r="9.500" fill="#c9c9c9" stroke="#666" stroke-width="2"/><circle cx="16" cy="16" r="4.500" fill="#f7f9f8" stroke="#666" stroke-width="2"/></svg></div>
        <label>Input Value Raster</label>
        <div class="field f3"><div class="box blk"><span>IGAC_2013_CurvasNivelSmooth100mTIN.tif</span><svg class="chev sm"><use href="#chev"/></svg></div><svg class="folder"><use href="#folder"/></svg></div>
        <label class="warned"><svg class="warn" viewBox="0 0 26 26"><path d="M13 2l12 23H1z" fill="#fbd3a1" stroke="#e6a35c" stroke-width="2"/><path d="M13 8v10M13 20v3" stroke="#555" stroke-width="3.500"/></svg>Output Table</label>
        <div class="field f3"><div class="box"><span>Mpio25899_DiviPol_DANE_2020_CurvasNivel_Stat</span></div><svg class="folder"><use href="#folder"/></svg></div>
        <div class="ck"><svg><use href="#checked"/></svg>Ignore NoData in Calculations</div>
        <label>Statistics Type</label>
        <div class="field"><div class="box blk"><span>All</span><svg class="chev sm"><use href="#chev"/></svg></div></div>
        <label>Percentile Values</label>
        <div class="pcts"><div class="box">15</div><div class="box">25</div><div class="box">75</div><div class="box">85</div></div>
        <div class="another"><svg class="i36"><use href="#plusc"/></svg>Add another</div>
        <label>Percentile Interpolation Type</label>
        <div class="field"><div class="box blk"><span>Auto-detect</span><svg class="chev sm"><use href="#chev"/></svg></div></div>
        <div class="ck"><svg><use href="#check"/></svg>Calculate Circular Statistics</div>
        <div class="ck ck2"><svg><use href="#check"/></svg>Process as Multidimensional</div>
        <label>Output Join Layer</label>
        <div class="field f3"><div class="box"></div><svg class="folder"><use href="#folder"/></svg></div>
      </div>
      <div class="run"><svg class="i32" viewBox="0 0 32 32"><circle cx="16" cy="16" r="15" fill="#cfe7f8" stroke="#4a9fd8" stroke-width="2"/><path d="M12 8v16l12-8z" fill="#4a9fd8"/></svg><span>Run</span><svg class="chev sm blk"><use href="#chev"/></svg></div>
      <div class="message">
        <svg class="i24" viewBox="0 0 24 24"><circle cx="12" cy="12" r="12" fill="#5fa75f"/><path d="M5 13l5 5 9-11" fill="none" stroke="#fff" stroke-width="3"/></svg>
        <div class="msgtext"><p>Zonal Statistics as Table completed.</p><p class="links"><a>View Details</a><a>Open History</a><svg class="bulb" viewBox="0 0 20 30"><path d="M4 20C4 15 1 14 1 9a9 8 0 0 1 18 0c0 5-3 6-3 11z" fill="#f6eca0" stroke="#d8c548" stroke-width="1.800"/><path d="M10 20v-9M7 10h6" stroke="#c08a45" stroke-width="1.600"/><path d="M5 22h10v5l-3 3H8l-3-3z" fill="#707070"/></svg><span>Suggestions</span></p></div>
        <svg class="px"><use href="#x"/></svg>
      </div>
    </section>
    <div class="bottom-tabs"><span>Catalog</span><span class="active">Geoprocessi...</span><span>Create Featu...</span><span>Modify Featu...</span><span>Symbology</span><span>Label Class</span></div>
  </div>
</main>
</body>
</html>
```
FILE: styles.css
```css
* { box-sizing: border-box; margin: 0; padding: 0; }
body { width: 3836px; height: 2062px; overflow: hidden; background: #ebebeb; color: #4a4a4a; font: 23.500px/1.2 "Open Sans", "Liberation Sans", sans-serif; letter-spacing: -0.035em; display: flex; flex-direction: column; }
svg { display: block; flex: none; overflow: visible; }
span, label, a, th, td, .t { white-space: nowrap; }
.defs { position: absolute; width: 0; height: 0; }
.i24 { width: 24px; height: 28px; } .i28 { width: 28px; height: 28px; } .i30 { width: 30px; height: 28px; }
.i32 { width: 32px; height: 32px; } .i34 { width: 34px; height: 34px; } .i36 { width: 36px; height: 36px; }
.chev { width: 20px; height: 15px; color: #555; }
.chev.sm { width: 15px; height: 12px; color: #777; }
.chev.dark { color: #333; } .chev.blk, .blk { color: #1a1a1a; }
.mag { width: 24px; height: 24px; color: #5c5c5c; }
.px { width: 20px; height: 20px; color: #4a4a4a; }
.pin { width: 16px; height: 22px; color: #4a4a4a; }
.tri { width: 10px; height: 8px; color: #4a4a4a; }
.sep { display: block; width: 2px; height: 30px; background: #a9a9a9; }
.dim { opacity: .4; } .off { opacity: .4; }

/* header */
.app-header { height: 115px; background: #f7f9f8; border-bottom: 2px solid #bfc1c6; flex: none; }
.titlebar { height: 62px; padding-left: 15px; display: grid; align-items: center; grid-template-columns: 56px 56px 53px 45px 28px 46px 42px 1330px 130px 984px 579px 80px 82px 86px 87px 88px 1fr; }
.qat { width: 18px; height: 18px; }
.soft { color: #6c6c6c; }
.cmd { width: 361px; height: 48px; border: 2px solid #969896; border-radius: 7px; display: flex; align-items: center; padding-left: 13px; gap: 11px; color: #8a8a8a; }
.avatar { width: 48px; height: 48px; border-radius: 50%; background: #1a1a1a; color: #aaa; font-size: 15px; display: grid; place-items: center; }
.bell { width: 26px; height: 32px; } .helpq { font-size: 30px; color: #555; } .win { width: 22px; height: 22px; color: #555; }
.menubar { height: 51px; padding-left: 36px; display: grid; align-items: center; font-size: 25px; color: #1a1a1a; grid-template-columns: 153px 115px 131px 156px 119px 109px 160px 129px 182px 125px 165px 264px; }
.ctx { height: 50px; width: 124px; background: #fff; border: 2px solid #dedede; border-radius: 7px; display: grid; place-items: center; }
.ctx.wide { width: 264px; }

.workspace { flex: 1; display: flex; padding: 12px 0 10px 11px; }
.panel { background: #f7f9f8; border: 2px solid #d2d3d8; border-radius: 8px; }
.contents { width: 550px; height: 1926px; margin-right: 13px; flex: none; }
.panel-head { height: 66px; padding: 4px 14px 0 12px; display: flex; align-items: center; gap: 21px; }
.panel-head h2 { flex: 1; font-size: 31px; font-weight: 400; color: #1a1a1a; }
.panel-head .chev { margin-right: -2px; }

/* contents */
.search-row { display: flex; align-items: center; gap: 14px; padding-left: 8px; height: 48px; }
.funnel { width: 28px; height: 32px; }
.search { width: 490px; height: 48px; background: #fff; border: 2px solid #8f8f8f; display: flex; align-items: center; padding: 0 9px 0 11px; color: #5c5c5c; }
.search i { flex: 1; } .search .chev { margin-left: 22px; }
.modes { display: grid; grid-template-columns: 65px 65px 65px 61px 66px 60px 59px 40px; padding: 20px 0 0 40px; height: 79px; align-items: start; }
.modes svg { width: 46px; height: 46px; } .modes svg:nth-child(7) { width: 35px; overflow: hidden; }
.modes .dots { width: 32px; height: 8px; margin-top: 29px; }
.mode-line { width: 426px; height: 6px; margin-left: 30px; background: linear-gradient(#007ac2, #007ac2) 0 0 / 64px 6px no-repeat, linear-gradient(#c9c9c9, #c9c9c9) 0 100% / 100% 2px no-repeat; }
.contents h3 { font-size: 26px; font-weight: 600; height: 71px; line-height: 82px; margin-left: 31px; }
.tree { color: #4a4a4a; }
.t { height: 48px; display: flex; align-items: center; padding-left: 27px; }
.t0 { padding-left: 5px; }
.tw { width: 13px; height: 13px; margin-right: 9px; }
.tc { width: 10px; height: 16px; margin: 0 6px 0 6px; }
.cb { width: 28px; height: 28px; margin-right: 11px; }
.mp { width: 32px; height: 32px; }
.t0 .mp { margin-right: 11px; }
.sw { height: 46px; padding: 4px 0 0 57px; }
.sw b { display: block; width: 40px; height: 32px; background: #b1b1b1; border: 2px solid #111; }
.sw .yellow { border: 3px solid #ff0; background: none; }
.ramp { height: 102px; padding-left: 57px; display: flex; gap: 13px; }
.ramp b { width: 40px; height: 94px; background: linear-gradient(#fafafa, #b5b0b0 14%, #6e3a1e 30%, #800000 43%, #b94a0c 52%, #f0b822 58%, #8fa52c 64%, #038038 72%, #2da52e 77%, #f7f9a8 86%, #b4f5c8 93%, #b0eee5); }
.ramp div { display: flex; flex-direction: column; justify-content: space-between; height: 97px; }
.strong { font-weight: 600; }
.tb { height: 46px; padding-left: 3px; margin: 0 2px 0 46px; }
.tb svg { width: 30px; height: 28px; margin-right: 15px; }
.tb.sel { background: #c5dbee; border: 1.500px solid #1980c4; padding-left: 1.500px; }

/* documents */
.docs { width: 2302px; flex: none; display: flex; flex-direction: column; gap: 12px; margin-right: 13px; }
.tabstrip { height: 50px; border-bottom: 6px solid #d2d3d8; display: flex; align-items: center; justify-content: space-between; padding-right: 8px; }
.tab { height: 45px; width: 243px; background: #d2d3d8; border-radius: 8px 8px 0 0; display: flex; align-items: center; padding: 3px 14px 0 11px; margin-top: -1px; }
.tab span { flex: 1; margin-left: 11px; }
.tab.wide { width: 527px; } .tab .tbi { width: 30px; height: 27px; } .tab .px { color: #6a6a6a; }
.doc:first-child { height: 734px; background: linear-gradient(#ebebeb 50px, #f7f9f8 50px); border-bottom: 2px solid #d2d3d8; flex: none; }
.mapview { height: 634px; margin: 0 2px; background: #fff; overflow: hidden; }
.mapsvg { width: 2298px; height: 634px; overflow: hidden; }
.land path { fill: none; stroke: #000; stroke-width: 2.600px; stroke-linejoin: round; vector-effect: non-scaling-stroke; }
.land .area { fill: #b1b1b1; }
.labels { font: 27.500px "Noto Sans", sans-serif; letter-spacing: 0; fill: #000; stroke: #fff; stroke-width: 5px; paint-order: stroke; stroke-linejoin: round; }
.mapbar { height: 48px; margin: 0 2px; padding-left: 9px; display: grid; align-items: center; grid-template-columns: 209px 9px 46px 38px 40px 39px 45px 33px 518px 317px 536px 10px 273px 19px 43px 16px 42px 12px 1fr; }
.scale { width: 200px; height: 44px; border: 2px solid #8f8f8f; background: #fff; display: flex; align-items: center; justify-content: space-between; padding: 0 9px 0 11px; color: #1a1a1a; }
.on { width: 40px; height: 40px; background: #97cbee; border: 2px solid #00609c; display: grid; place-items: center; }
.chev.fat { height: 16px; stroke-width: 2; }
.self { display: flex; gap: 8px; align-items: center; height: 40px; width: 264px; padding-left: 5px; background: #fbfcfc; color: #a0a0a0; }
.self svg { opacity: .5; }

.attr { flex: 1; display: flex; flex-direction: column; }
.attr-body { height: 1130px; border: 2px solid #d2d3d8; border-top: 0; background: #f7f9f8; padding: 2px 1px 0 1px; }
.toolbar { height: 60px; border: 2px solid #bcbdc1; background: #eeeff1; display: grid; align-items: center; padding-left: 11px; grid-template-columns: 75px 39px 62px 39px 118px 16px 125px 39px 227px 38px 115px 38px 88px 39px 73px 39px 88px 39px 77px 16px 82px 40px 67px 656px 1fr; }
.toolbar b { font-weight: 600; } .toolbar .sep { height: 44px; background: #c6c7ca; }
.burger { width: 28px; height: 28px; }
.gridframe { height: 1010px; margin-top: 2px; border: 2px solid #c9c9c9; background: #ebebeb; display: grid; grid-template: 961px 1fr / 2247px 1fr; }
.clip { overflow: hidden; border-top: 1px solid #ebebeb; }
table, thead, tbody { display: block; width: 2400px; }
tr { display: grid; height: 61.540px; grid-template-columns: 59px 176px 350px 187px 133.500px 148px 185.500px 187px 170.500px 185.500px 170.500px 279.500px 200px; background: #fff; }
tbody tr:nth-child(even) { background: #ebebeb; }
th, td { display: flex; align-items: center; justify-content: flex-end; font-size: 28.600px; letter-spacing: -0.034em; padding: 0 12px; border-right: 2px solid #cbcbcb; border-bottom: 3px solid #cbcbcb; }
td:nth-child(-n+3) { justify-content: flex-start; }
td:first-child { background: #ebebeb; }
th { justify-content: flex-start; background: #ebebeb; font-size: 27.500px; font-weight: 700; border-right-color: #d6d6d6; border-bottom-width: 1px; padding-left: 11px; }
thead tr { height: 62px; }
th:first-child { background: #fff; align-items: flex-end; justify-content: flex-end; padding: 0 6px 6px 0; border-right: 1px solid #ddd; }
.corner { width: 26px; height: 26px; }
th.cur { background: #c7e2f5; border-bottom: 5px solid #007ac2; padding-top: 4px; }
.first td:first-child { background: #c7e2f5; border-right: 4px solid #007ac2; }
.first td:nth-child(2) { background: #c7e2f5; }
.vscroll { display: flex; flex-direction: column; align-items: center; justify-content: space-between; padding: 16px 0 16px 1px; }
.vscroll b { width: 23px; height: 791px; border-radius: 12px; background: #b4b4b4; margin: 14px 0 auto; }
.up { transform: rotate(180deg); }
.hscroll { grid-column: 1 / -1; display: flex; align-items: center; padding: 0 60px 0 11px; }
.left { transform: rotate(90deg); } .right { transform: rotate(-90deg); margin-left: auto; }
.hscroll b { height: 23px; width: 1533px; border-radius: 10px; background: #b4b4b4; margin-left: 15px; }
.statusbar { height: 54px; display: grid; align-items: center; grid-template-columns: 84px 66px 46px 44px 1326px 77px 129px 14px 48px 27px 214px 30px 131px 16px 1fr; }
.view { width: 64px; height: 44px; background: #c1c2c7; border: 2px solid #3aaee8; display: grid; place-items: center; }
.rw { width: 30px; height: 27px; } .nav { width: 18px; height: 18px; }
.filters { width: 126px; height: 48px; background: #eeeff1; display: flex; gap: 11px; align-items: center; padding-left: 8px; }
.filters svg { width: 31px; height: 31px; }
.ud { width: 20px; height: 30px; } .pm { width: 16px; height: 16px; }
.slider { width: 200px; height: 22px; display: flex; align-items: center; }
.slider b { width: 111px; height: 6px; background: #6e6e6e; } .slider u { width: 6px; height: 22px; background: #6e6e6e; } .slider s { flex: 1; height: 6px; background: #dcdedd; }
.pct { width: 120px; height: 44px; background: #fff; color: #1a1a1a; display: flex; align-items: center; justify-content: space-between; padding: 0 11px 0 13px; }

/* geoprocessing */
.side { width: 940px; flex: none; }
.geo { height: 1887px; border-radius: 8px 8px 0 0; display: flex; flex-direction: column; align-items: stretch; }
.geo .panel-head { padding-right: 13px; gap: 19px; flex: none; }
.tool-title { display: flex; justify-content: space-between; align-items: center; padding: 0 11px 0 13px; height: 50px; font-size: 28.500px; margin-top: -1px; }
.ptabs { display: flex; height: 64px; margin: 7px 11px 0 17px; align-items: flex-end; font-size: 25px; }
.ptabs b { font-weight: 600; border-bottom: 4px solid #007ac2; height: 42px; width: 133px; margin-right: 20px; }
.ptabs span { height: 42px; } .ptabs svg { margin: 0 0 8px auto; }
.form { padding: 26px 15px 0 35px; display: flex; flex-direction: column; }
label { display: block; height: 28px; line-height: 26px; }
.field { height: 44px; display: flex; align-items: center; margin-bottom: 22px; }
.box { flex: 1; height: 44px; background: #fff; border: 2px solid #8f918f; display: flex; align-items: center; justify-content: space-between; padding: 0 8px; }
.box .chev { width: 13px; }
.field.f1 .box, .field.f2 .box, .field.f3 .box { flex: none; width: 834px; }
.field.f1 .box { width: 756px; } .field.f2 .box { width: 838px; } .field.f2 .i32 { margin-left: 8px; }
.field.f1 .folder { margin-right: 24px; }
.folder { width: 32px; height: 26px; margin-left: 14px; } .pen { width: 30px; height: 28px; margin-right: 8px; }
.warned { display: flex; margin-left: -31px; } .warn { width: 26px; height: 27px; margin-right: 5px; }
.ck { height: 28px; margin: -2px 0 24px; display: flex; align-items: center; gap: 12px; } .ck svg { width: 28px; height: 28px; }
.ck2 { margin: 12px 0 24px; } .ck:has(+ .ck2) { margin-bottom: 10px; }
.pcts { padding: 2px 0 0 50px; display: flex; flex-direction: column; gap: 4px; } .pcts .box { flex: none; justify-content: flex-end; padding-right: 4px; }
.another { display: flex; justify-content: flex-end; align-items: center; gap: 8px; height: 36px; margin: 18px 14px 32px 0; }
.run { width: 170px; height: 48px; margin: auto 11px 12px auto; background: #fff; border: 2px solid #4a4a4a; border-radius: 5px; display: flex; align-items: center; padding: 0 7px 0 21px; flex: none; }
.run span { flex: 1; margin-left: 15px; }
.message { height: 92px; margin: 0 5px 3px 7px; background: #e3efe2; display: flex; align-items: center; padding: 0 14px 0 26px; flex: none; }
.message .i24 { height: 24px; } .message .px { color: #888; width: 18px; height: 16px; }
.msgtext { flex: 1; margin-left: 34px; } .msgtext p { height: 40px; line-height: 40px; }
.links { display: flex; align-items: center; } .links a { color: #4a9fd8; margin-right: 14px; } .bulb { width: 20px; height: 30px; margin: 0 6px 0 3px; } .links span { color: #666; }
.bottom-tabs { height: 40px; display: grid; grid-template-columns: 94px 190px 185px 189px 144px 120px; align-items: center; padding-left: 11px; }
.bottom-tabs .active { height: 42px; width: 177px; background: #f7f9f8; border: 2px solid #d2d3d8; border-top: 0; border-radius: 0 0 7px 7px; color: #007ac2; padding-left: 10px; line-height: 40px; margin-top: -4px; }
```
